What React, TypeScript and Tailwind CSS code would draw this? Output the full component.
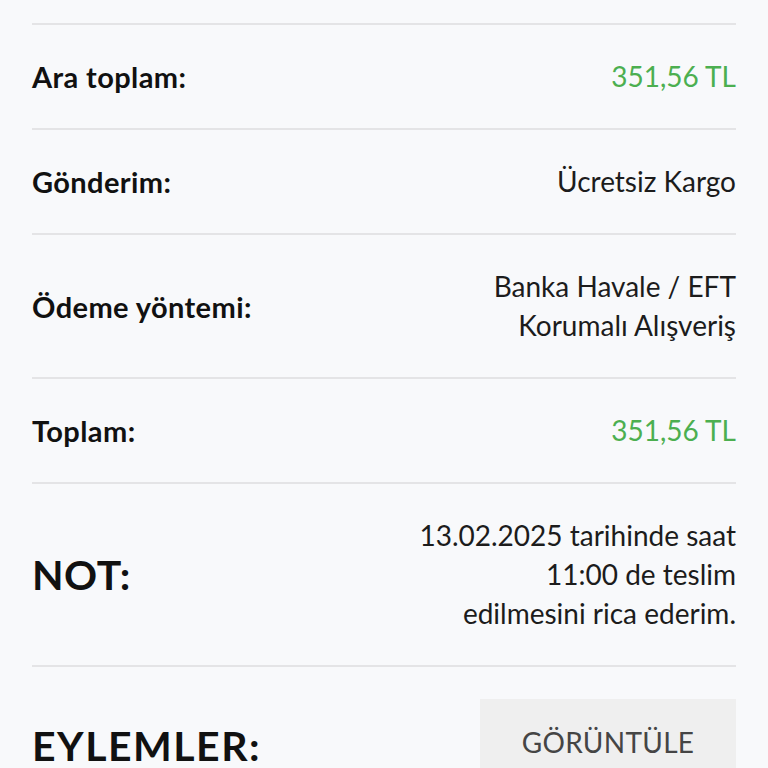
import React from 'react'

const font = { fontFamily: 'Lato, "Noto Sans", sans-serif' }

function Row({
  label,
  children,
  big = false,
}: {
  label: string
  children: React.ReactNode
  big?: boolean
}) {
  return (
    <div className="flex items-center justify-between border-t-2 border-[#e4e4e6] py-8">
      <div
        className={
          big
            ? 'text-[41px] leading-[48px] font-bold tracking-[0.5px] text-[#111]'
            : 'text-[29px] leading-[39px] font-bold tracking-[0.4px] text-[#111]'
        }
      >
        {label}
      </div>
      <div className="text-right text-[28px] leading-[39px] text-[#1c1c1c]">{children}</div>
    </div>
  )
}

export default function App() {
  return (
    <div style={font} className="min-h-screen bg-[#f8f9fb] px-8 pt-[23px] overflow-hidden">
      <Row label="Ara toplam:">
        <span className="text-[#4caf50]">351,56 TL</span>
      </Row>
      <Row label="Gönderim:">Ücretsiz Kargo</Row>
      <Row label="Ödeme yöntemi:">
        <div>Banka Havale / EFT</div>
        <div>Korumalı Alışveriş</div>
      </Row>
      <Row label="Toplam:">
        <span className="text-[#4caf50]">351,56 TL</span>
      </Row>
      <Row label="NOT:" big>
        <div>13.02.2025 tarihinde saat</div>
        <div>11:00 de teslim</div>
        <div>edilmesini rica ederim.</div>
      </Row>
      <div className="flex items-center justify-between border-t-2 border-[#e4e4e6] pt-8">
        <div className="pt-[6px] text-[41px] leading-[48px] font-bold tracking-[1.5px] text-[#111]">
          EYLEMLER:
        </div>
        <button className="w-64 bg-[#efefef] py-6 text-[28px] leading-[39px] tracking-[0.3px] text-[#454545]">
          GÖRÜNTÜLE
        </button>
      </div>
    </div>
  )
}
